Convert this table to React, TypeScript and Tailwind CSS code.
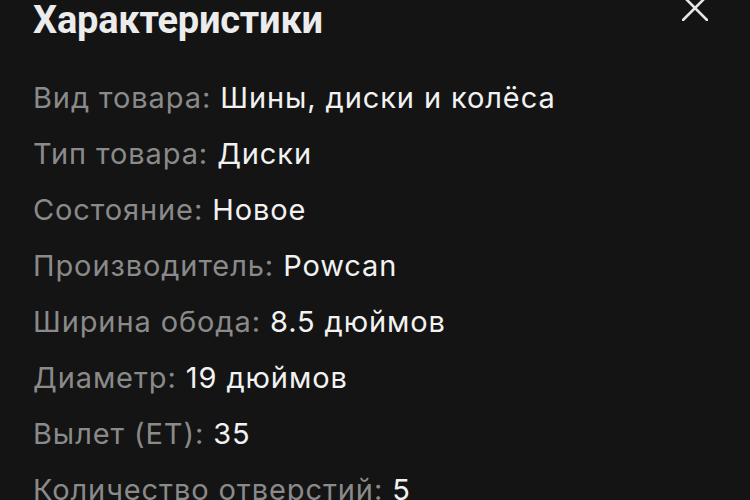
const specs: [string, string][] = [
  ['Вид товара', 'Шины, диски и колёса'],
  ['Тип товара', 'Диски'],
  ['Состояние', 'Новое'],
  ['Производитель', 'Powcan'],
  ['Ширина обода', '8.5 дюймов'],
  ['Диаметр', '19 дюймов'],
  ['Вылет (ET)', '35'],
  ['Количество отверстий', '5'],
];

export default function App() {
  return (
    <div
      className="w-[750px] h-[500px] overflow-hidden bg-[#141414] text-[#f2f2f2]"
      style={{ fontFamily: 'Inter, Roboto, sans-serif' }}
    >
      <div className="flex items-start justify-between pl-[33px] pr-[42px]">
        <h1
          className="-mt-[4px] text-[38px] font-bold leading-[48px] tracking-[-0.2px] text-[#ececec]"
          style={{ fontFamily: 'Roboto, Inter, sans-serif' }}
        >
          Характеристики
        </h1>
        <svg className="-mt-[5px]" width="26" height="26" viewBox="0 0 26 26" fill="none">
          <path d="M1 1 L25 25 M25 1 L1 25" stroke="#e6e6e6" strokeWidth="2.6" strokeLinecap="round" />
        </svg>
      </div>
      <div className="mt-[26px] flex flex-col pl-[33px]">
        {specs.map(([label, value]) => (
          <div key={label} className="text-[29px] leading-[56px] tracking-[0.9px] whitespace-nowrap">
            <span className="text-[#8a8a8a]">{label}: </span>
            <span className="text-[#f2f2f2]">{value}</span>
          </div>
        ))}
      </div>
    </div>
  );
}
